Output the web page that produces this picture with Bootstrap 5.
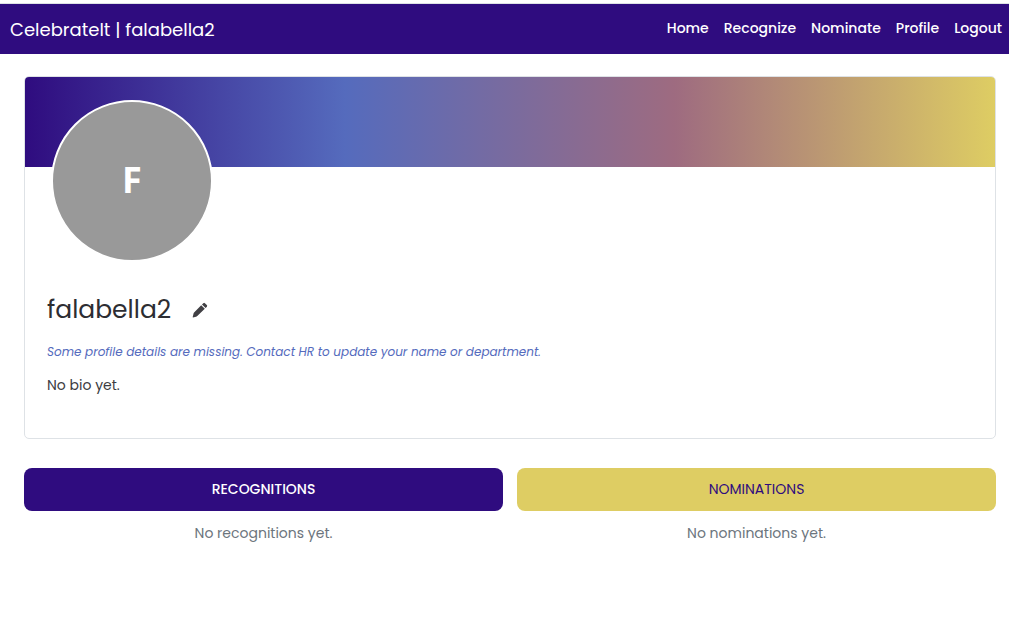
<!DOCTYPE html>
<html lang="en">
<head>
<meta charset="utf-8">
<meta name="viewport" content="width=device-width, initial-scale=1">
<title>CelebrateIt</title>
<link href="https://cdn.jsdelivr.net/npm/bootstrap@5.3.0/dist/css/bootstrap.min.css" rel="stylesheet">
<style>
  :root { --indigo: #2f0c7f; --gold: #decd63; }
  body { font-family: Poppins, Inter, sans-serif; font-size: 14px; line-height: 22px; background: #fff; }
  .topbar { margin-top: 3px; border-top: 1px solid #dee2e6; }
  .topbar-inner { background: var(--indigo); min-height: 50px; padding: 0 7px 0 10px; }
  .navbar-brand { font-size: 18px; line-height: 28px; padding: 6px 0 4px; }
  .menu { gap: 15px; padding-bottom: 2px; }
  .menu .nav-link { color: #fff; font-size: 14px; font-weight: 500; padding: 0; }
  .page { padding: 22px 13px 24px 24px; }
  .profile { border-color: #dee2e6; border-radius: 5px; overflow: hidden; }
  .banner { height: 90px; background: linear-gradient(to right, #2f0c7f, #556bbd 33%, #9e6b80 67%, #decd63); }
  .profile-body { padding: 0 22px 42px; }
  .avatar { width: 162px; height: 162px; margin: -67px 0 0 4px; border: 2px solid #fff; background: #999; color: #fff; font: 700 36px "Open Sans", sans-serif; padding-bottom: 3px; }
  .user { font-size: 25px; line-height: 36px; color: #2d2d32; }
  .title-row { margin-top: 30px; gap: 21px; }
  .edit { width: 16px; height: 16px; color: #414044; }
  .notice { font-size: 12px; line-height: 20px; color: #556bbd; margin: 14px 0 12px; }
  .bio { font-size: 14px; color: #3c3c41; }
  .lists { margin-top: 29px; --bs-gutter-x: 14px; }
  .tab { font-size: 14px; line-height: 21px; padding: 11px; border-radius: 8px; }
  .tab-indigo, .tab-indigo:hover { background: var(--indigo); color: #fff; font-weight: 500; }
  .tab-gold, .tab-gold:hover { background: var(--gold); color: var(--indigo); }
  .empty { margin-top: 11px; color: #6c757d; }
</style>
</head>
<body>
<header class="topbar">
  <nav class="topbar-inner d-flex flex-wrap align-items-center justify-content-between">
    <a class="navbar-brand text-white m-0" href="#">CelebrateIt | falabella2</a>
    <div class="menu nav">
      <a class="nav-link" href="#">Home</a>
      <a class="nav-link" href="#">Recognize</a>
      <a class="nav-link" href="#">Nominate</a>
      <a class="nav-link" href="#">Profile</a>
      <a class="nav-link" href="#">Logout</a>
    </div>
  </nav>
</header>
<main class="page">
  <section class="card profile">
    <div class="banner"></div>
    <div class="profile-body">
      <div class="avatar rounded-circle d-flex align-items-center justify-content-center">F</div>
      <div class="title-row d-flex align-items-center">
        <h1 class="user fw-normal m-0">falabella2</h1>
        <button type="button" class="edit btn border-0 p-0 d-flex" aria-label="Edit profile">
          <svg width="16" height="16" viewBox="0 0 16 16" fill="currentColor" aria-hidden="true"><path d="M9.2 3.2 12.8 6.8 5 14.3Q4.600 14.700 4 14.800L1 15.400Q.6 15.400.7 15L1.500 11.700Q1.600 11 2.100 10.500ZM10 2.400 11.300 1.200Q12.100.5 12.900 1.200L14.800 3.100Q15.600 3.900 14.900 4.700L13.600 6Z"/></svg>
        </button>
      </div>
      <p class="notice fst-italic">Some profile details are missing. Contact HR to update your name or department.</p>
      <p class="bio m-0">No bio yet.</p>
    </div>
  </section>
  <div class="row lists">
    <div class="col-6 text-center">
      <button type="button" class="btn tab tab-indigo border-0 w-100 text-uppercase">Recognitions</button>
      <p class="empty mb-0">No recognitions yet.</p>
    </div>
    <div class="col-6 text-center">
      <button type="button" class="btn tab tab-gold border-0 w-100 text-uppercase">Nominations</button>
      <p class="empty mb-0">No nominations yet.</p>
    </div>
  </div>
</main>
<script src="https://cdn.jsdelivr.net/npm/bootstrap@5.3.0/dist/js/bootstrap.bundle.min.js"></script>
</body>
</html>
